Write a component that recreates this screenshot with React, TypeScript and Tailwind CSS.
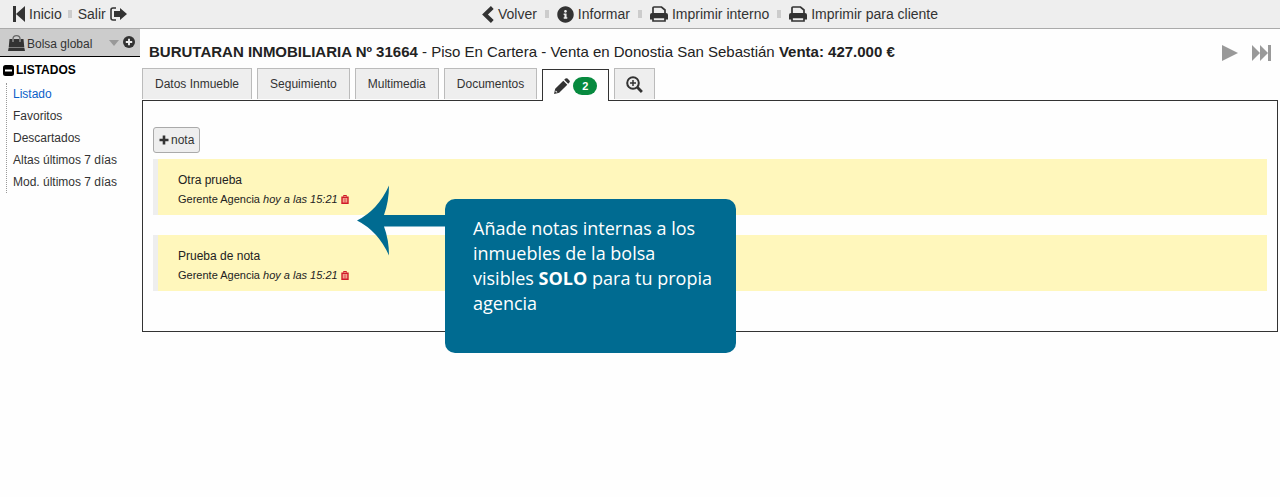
import type { ReactNode } from "react";
import { FaInfoCircle } from "react-icons/fa";

const listLinks = ["Listado", "Favoritos", "Descartados", "Altas últimos 7 días", "Mod. últimos 7 días"];

const tabs = ["Datos Inmueble", "Seguimiento", "Multimedia", "Documentos"];

const notes = [
  { id: 1, text: "Otra prueba", author: "Gerente Agencia", date: "hoy a las 15:21" },
  { id: 2, text: "Prueba de nota", author: "Gerente Agencia", date: "hoy a las 15:21" },
];

const StartIcon = () => (
  <svg viewBox="0 0 12 16" className="h-4 w-3" fill="currentColor" aria-hidden="true">
    <path d="M0 0h3v16H0zM12 0v16L3 8z" />
  </svg>
);

const ExitIcon = () => (
  <svg viewBox="0 0 17 14" className="h-[14px] w-[17px]" aria-hidden="true">
    <path d="M6 1H3Q1 1 1 3v8q0 2 2 2h3" fill="none" stroke="currentColor" strokeWidth="1.6" />
    <path d="M4 4h6V1l7 6-7 6v-3H4z" fill="currentColor" />
  </svg>
);

const BackIcon = () => (
  <svg viewBox="0 0 12 17" className="h-[17px] w-3" fill="none" stroke="currentColor" aria-hidden="true">
    <path d="M10.300 1.500L3 8.500l7.300 7" strokeWidth="4" />
  </svg>
);

const PrinterIcon = () => (
  <svg viewBox="0 0 18 16" className="h-4 w-[18px]" aria-hidden="true">
    <path d="M3 8V2q0-1 1-1h7.500L15 4v4" fill="none" stroke="currentColor" strokeWidth="1.700" />
    <path d="M2 7h14q2 0 2 2v4.500H0V9q0-2 2-2z" fill="currentColor" />
    <path d="M3 11.500h12V15H3z" fill="#eee" stroke="currentColor" strokeWidth="1.700" />
  </svg>
);

const BagIcon = () => (
  <svg viewBox="0 0 17 16" className="h-4 w-[17px]" aria-hidden="true">
    <path d="M5 7V4q0-3.300 3.500-3.300T12 4v3" fill="none" stroke="#666" strokeWidth="1.300" />
    <path d="M1.500 4h2.700v3h1.600V4h5.400v3h1.600V4h2.700l.8 8.400H.7zM.6 12.900h15.800L17 16H0z" fill="currentColor" />
  </svg>
);

const CaretIcon = () => (
  <svg viewBox="0 0 10 6" className="h-[6px] w-[10px]" fill="#999" aria-hidden="true">
    <path d="M0 0h10L5 6z" />
  </svg>
);

const PlusCircleIcon = () => (
  <svg viewBox="0 0 12 12" className="size-3" aria-hidden="true">
    <circle cx="6" cy="6" r="6" fill="currentColor" />
    <path d="M6 2.800v6.400M2.800 6h6.400" stroke="#eee" strokeWidth="1.900" />
  </svg>
);

const MinusSquareIcon = () => (
  <svg viewBox="0 0 11 11" className="size-[11px]" aria-hidden="true">
    <rect width="11" height="11" rx="2.500" fill="currentColor" />
    <path d="M2 5.500h7" stroke="#fff" strokeWidth="2" />
  </svg>
);

const PlusIcon = () => (
  <svg viewBox="0 0 10 10" className="size-[10px]" stroke="currentColor" aria-hidden="true">
    <path d="M5 .5v9M.5 5h9" strokeWidth="2.600" />
  </svg>
);

const PencilIcon = () => (
  <svg viewBox="0 0 16 16" className="size-4" aria-hidden="true">
    <path d="M0 16l1.200-5.200L9.300 2.700l4 4-8.100 8.100zM10.200 1.800L11.500.6q1-.9 2 0l1.900 1.900q.9 1 0 2L14.200 5.800z" fill="currentColor" />
    <path d="M1.800 12.500l1.700 1.700-1.300.4-.8-.8z" fill="#fff" />
  </svg>
);

const ZoomIcon = () => (
  <svg viewBox="0 0 17 17" className="size-[17px]" fill="none" stroke="currentColor" aria-hidden="true">
    <circle cx="7" cy="7" r="5.800" strokeWidth="2" />
    <path d="M7 4v6M4 7h6" strokeWidth="1.500" />
    <path d="M11.300 11.300l4.600 4.600" strokeWidth="2.800" />
  </svg>
);

const PlayIcon = () => (
  <svg viewBox="0 0 16 16" className="size-4" fill="currentColor" aria-hidden="true">
    <path d="M0 0l16 8-16 8z" />
  </svg>
);

const NextIcon = () => (
  <svg viewBox="0 0 19 16" className="h-4 w-[19px]" fill="currentColor" aria-hidden="true">
    <path d="M0 0l8 8-8 8zM8 0l8 8-8 8zM16 0h3v16h-3z" />
  </svg>
);

const TrashIcon = () => (
  <svg viewBox="0 0 8 9" className="h-[9px] w-2" aria-hidden="true">
    <path d="M2.500 1.500V.5h3v1" fill="none" stroke="currentColor" />
    <path d="M1 2.200h6V8.300H1z" fill="#f3a08c" stroke="currentColor" strokeWidth="1.400" />
    <path d="M4 3.500v4" stroke="currentColor" strokeWidth=".6" />
  </svg>
);

const Separator = () => <span className="h-2 w-1 bg-[#ccc]" />;

const BarLink = ({ icon, children }: { icon: ReactNode; children: ReactNode }) => (
  <a href="#" className="flex items-center gap-1">
    {icon}
    {children}
  </a>
);

const Sidebar = () => (
  <aside className="w-[140px] shrink-0">
    <div className="flex h-7 items-center border-b border-black bg-[#ccc] pr-[5px] pl-2 text-xs">
      <BagIcon />
      <span className="ml-[2px] flex-1 pt-[2px]">Bolsa global</span>
      <button type="button" aria-label="Elegir bolsa" className="mr-1">
        <CaretIcon />
      </button>
      <button type="button" aria-label="Añadir a la bolsa" className="pb-[2px]">
        <PlusCircleIcon />
      </button>
    </div>
    <h2 className="flex h-[26px] items-center gap-[2px] pl-[3px] text-xs font-bold text-black">
      <MinusSquareIcon />
      LISTADOS
    </h2>
    <ul className="ml-[6px] border-l border-dotted border-[#999] pl-[6px] text-xs">
      {listLinks.map((label, i) => (
        <li key={label}>
          <a href="#" className={i === 0 ? "block leading-[22px] text-[#0b5fc9]" : "block leading-[22px]"}>
            {label}
          </a>
        </li>
      ))}
    </ul>
  </aside>
);

const Callout = () => (
  <div className="absolute top-[98px] left-[214px] flex items-start">
    <svg viewBox="0 0 89 71" className="-mt-[14px] -mr-px h-[71px] w-[89px]" fill="#006b91" aria-hidden="true">
      <path d="M0 35.500Q21 25 32 .5Q32 16 27 30H89V41.500H27Q32 55 32 70.500Q21 46 0 35.500z" />
    </svg>
    <div className="w-[291px] rounded-[10px] bg-[#006b91] pt-[17px] pr-5 pb-[37px] pl-7 font-['Open_Sans',sans-serif] text-lg leading-[25px] text-white">
      Añade notas internas a los inmuebles de la bolsa visibles <b>SOLO</b> para tu propia agencia
    </div>
  </div>
);

const App = () => {
  return (
    <div className="min-h-screen bg-[#fefefe] font-['Liberation_Sans',Arial,sans-serif] text-[#333]">
      {/* Top bar */}
      <header className="flex h-[29px] items-center border-b border-[#aaa] bg-[#eee] text-sm">
        <nav className="flex w-[140px] shrink-0 items-center gap-[6px] pl-[13px]">
          <BarLink icon={<StartIcon />}>Inicio</BarLink>
          <Separator />
          <a href="#" className="flex items-center gap-1">
            Salir
            <ExitIcon />
          </a>
        </nav>
        <nav className="flex flex-1 items-center justify-center gap-2">
          <BarLink icon={<BackIcon />}>Volver</BarLink>
          <Separator />
          <BarLink icon={<FaInfoCircle className="size-[17px]" />}>Informar</BarLink>
          <Separator />
          <BarLink icon={<PrinterIcon />}>Imprimir interno</BarLink>
          <Separator />
          <BarLink icon={<PrinterIcon />}>Imprimir para cliente</BarLink>
        </nav>
      </header>

      <div className="flex">
        <Sidebar />

        <main className="min-w-0 flex-1 px-[2px]">
          <div className="flex h-[39px] items-center justify-between pt-2 pr-[7px] pl-[7px]">
            <h1 className="text-[15px] text-[#222]">
              <b>BURUTARAN INMOBILIARIA Nº 31664</b> - Piso En Cartera - Venta en Donostia San Sebastián{" "}
              <b>Venta: 427.000 €</b>
            </h1>
            <div className="flex items-center gap-[14px] text-[#999]">
              <button type="button" aria-label="Siguiente">
                <PlayIcon />
              </button>
              <button type="button" aria-label="Último">
                <NextIcon />
              </button>
            </div>
          </div>

          {/* Tabs */}
          <div className="flex items-start gap-[5px] text-xs">
            {tabs.map((tab) => (
              <button key={tab} type="button" className="h-[31px] border border-b-0 border-[#bbb] bg-[#eee] px-3">
                {tab}
              </button>
            ))}
            <button
              type="button"
              aria-label="Notas"
              className="relative z-10 mt-px -mb-px flex h-8 items-center gap-[3px] border border-b-0 border-[#333] bg-[#fefefe] px-[11px]"
            >
              <PencilIcon />
              <span className="rounded-full bg-[#078a3f] px-[9px] text-[11px] leading-[18px] font-bold text-white">2</span>
            </button>
            <button type="button" aria-label="Buscar" className="flex h-[31px] items-center border border-b-0 border-[#bbb] bg-[#eee] px-[11px]">
              <ZoomIcon />
            </button>
          </div>

          {/* Notes */}
          <section className="relative border border-[#333] px-[10px] pt-[26px] pb-10">
            <button type="button" className="flex h-[26px] items-center gap-[2px] rounded-[3px] border border-[#aaa] bg-[#eee] px-[5px] text-xs">
              <PlusIcon />
              nota
            </button>
            <div className="mt-[6px] flex flex-col gap-5">
              {notes.map((note) => (
                <article key={note.id} className="h-14 border-l-[5px] border-[#eee] bg-[#fff7bc] pt-3 pl-5 text-[#222]">
                  <p className="text-xs leading-[18px]">{note.text}</p>
                  <p className="flex items-center gap-[3px] text-[11px] leading-5">
                    <span>
                      {note.author} <em>{note.date}</em>
                    </span>
                    <button type="button" aria-label="Borrar nota" className="text-[#d11a2a]">
                      <TrashIcon />
                    </button>
                  </p>
                </article>
              ))}
            </div>
            <Callout />
          </section>
        </main>
      </div>
    </div>
  );
};

export default App;
